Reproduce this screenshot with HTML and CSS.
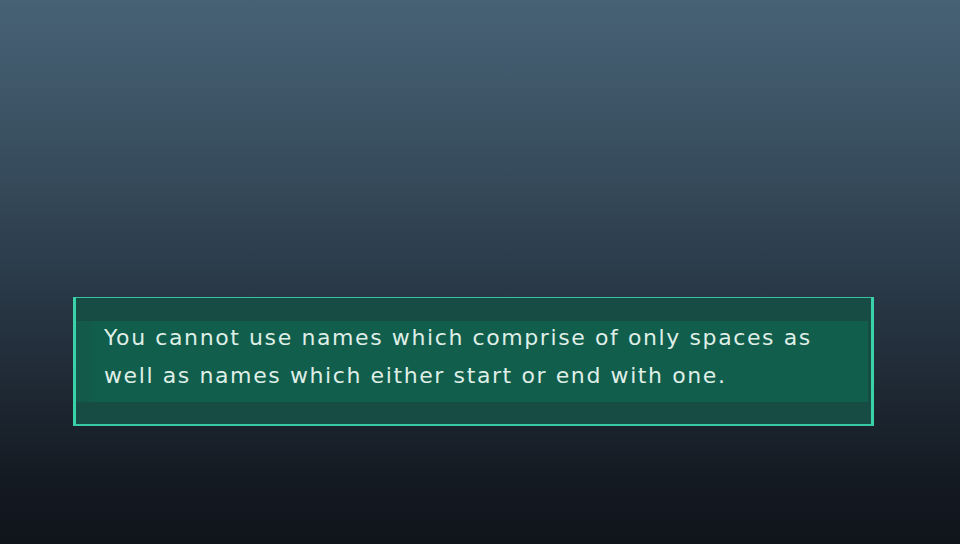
FILE: index.html
```html
<!DOCTYPE html>
<html lang="en">
<head>
<meta charset="utf-8">
<title>Name notice</title>
<link rel="stylesheet" href="styles.css">
</head>
<body>
<main class="screen">
  <section class="dialog">
    <div class="band">
      <p class="message">You cannot use names which comprise of only spaces as<br>well as names which either start or end with one.</p>
    </div>
  </section>
</main>
</body>
</html>
```
FILE: styles.css
```css
html, body {
  margin: 0;
  padding: 0;
}
.screen {
  width: 960px;
  height: 544px;
  overflow: hidden;
  background: linear-gradient(to bottom, #476175 0%, #3a5162 25%, #2b3b4a 50%, #1e2833 72%, #141a22 88%, #10151c 100%);
  display: flex;
  flex-direction: column;
  padding-top: 297px;
  box-sizing: border-box;
}
.dialog {
  margin-left: 73px;
  width: 795px;
  background: #174c45;
  border-top: 1px solid #36c4a0;
  border-bottom: 2px solid #36c9a3;
  border-left: 3px solid #3ad2a8;
  border-right: 3px solid #3ad2a8;
  padding: 23px 0 22px;
}
.band {
  display: flow-root;
  height: 81px;
  background: linear-gradient(to right, #135a4b 0px, #135a4b 16px, #115e4d 16px, #115e4d 100%);
  margin-right: 3px;
  box-sizing: border-box;
  padding: 0 0 0 28px;
}
.message {
  margin: -2px 0 0;
  font-family: "DejaVu Sans", sans-serif;
  font-size: 22px;
  line-height: 38px;
  color: #dfeee6;
  letter-spacing: 1.6px;
}
```
